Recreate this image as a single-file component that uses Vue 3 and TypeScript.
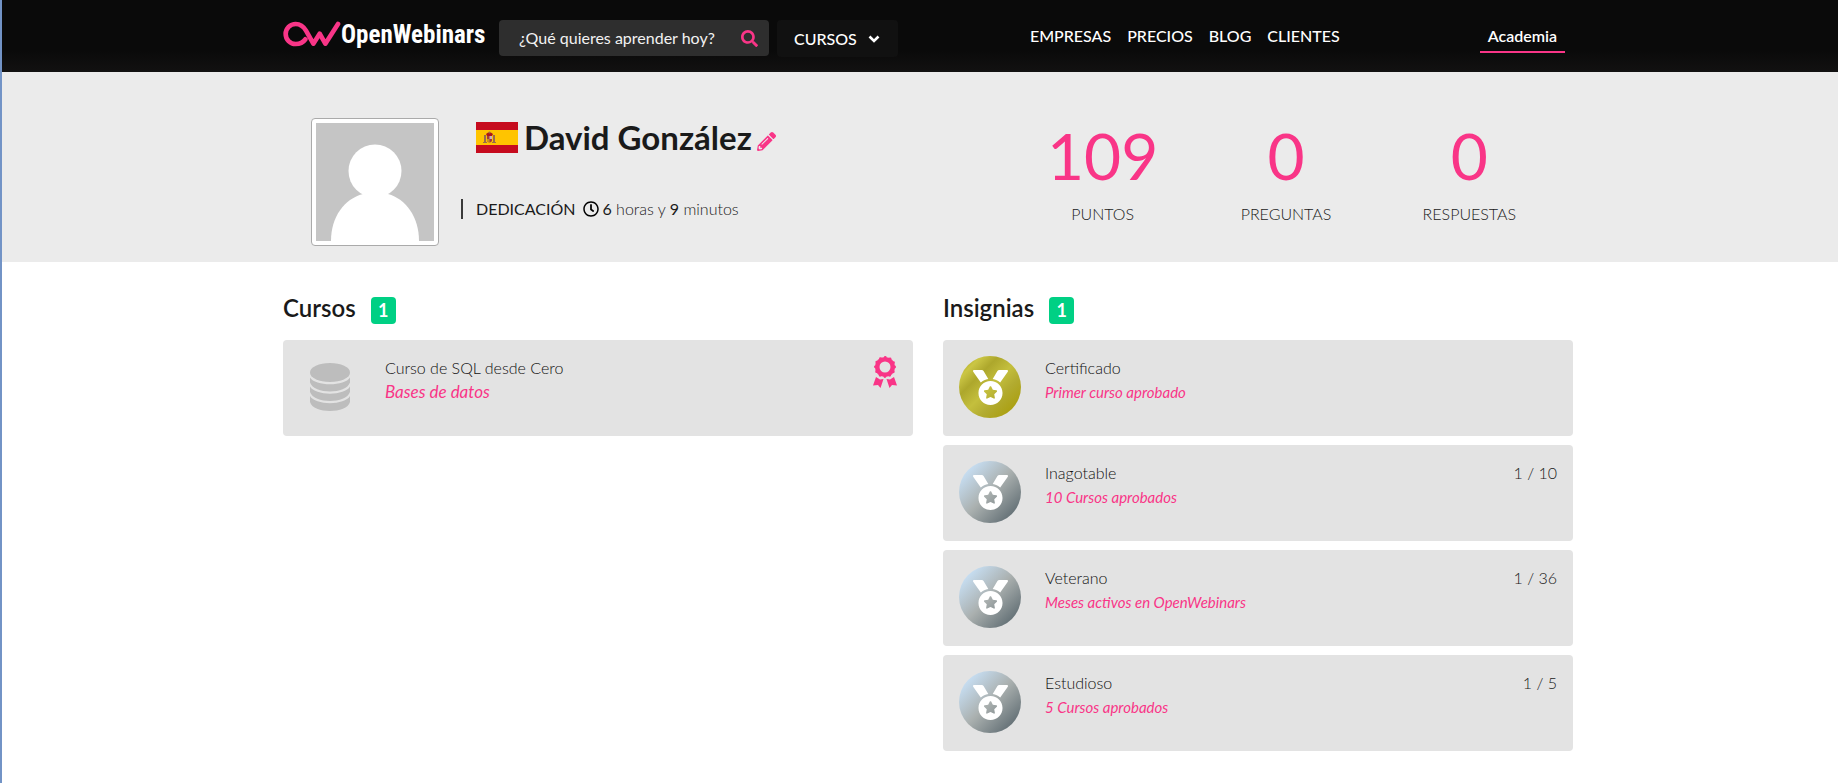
<script setup lang="ts">
import { ref } from 'vue'

interface Stat {
  value: number
  label: string
}

interface Badge {
  title: string
  detail: string
  tone: 'gold' | 'silver'
  progress?: string
}

const query = ref('')
const links = ['EMPRESAS', 'PRECIOS', 'BLOG', 'CLIENTES']

const stats: Stat[] = [
  { value: 109, label: 'PUNTOS' },
  { value: 0, label: 'PREGUNTAS' },
  { value: 0, label: 'RESPUESTAS' },
]

const badges: Badge[] = [
  { title: 'Certificado', detail: 'Primer curso aprobado', tone: 'gold' },
  { title: 'Inagotable', detail: '10 Cursos aprobados', tone: 'silver', progress: '1 / 10' },
  { title: 'Veterano', detail: 'Meses activos en OpenWebinars', tone: 'silver', progress: '1 / 36' },
  { title: 'Estudioso', detail: '5 Cursos aprobados', tone: 'silver', progress: '1 / 5' },
]
</script>

<template>
  <div class="page">
    <header class="topbar">
      <div class="container bar">
        <a class="logo" href="#" aria-label="OpenWebinars">
          <svg class="logo-mark" viewBox="0 0 174 84" aria-hidden="true">
            <path d="M67 58C60 68 50 72 38 72A30 30 0 0 1 38 12C53 12 62 20 69 32L91 71L110 41L127 71L165 12" />
          </svg>
          <span class="logo-name">OpenWebinars</span>
        </a>
        <form class="search" role="search" @submit.prevent>
          <input v-model="query" type="text" aria-label="Buscar" placeholder="¿Qué quieres aprender hoy?" />
          <button type="submit" aria-label="Buscar cursos">
            <svg viewBox="0 0 512 512" aria-hidden="true">
              <path d="M505 442.7L405.3 343c-4.5-4.5-10.6-7-17-7H372c27.6-35.3 44-79.7 44-128C416 93.1 322.9 0 208 0S0 93.1 0 208s93.1 208 208 208c48.3 0 92.7-16.4 128-44v16.3c0 6.4 2.5 12.5 7 17l99.7 99.7c9.4 9.4 24.6 9.4 33.9 0l28.3-28.3c9.4-9.4 9.4-24.6.1-34zM208 336c-70.7 0-128-57.2-128-128 0-70.7 57.2-128 128-128 70.7 0 128 57.2 128 128 0 70.7-57.2 128-128 128z" />
            </svg>
          </button>
        </form>
        <button class="courses" type="button">
          CURSOS
          <svg viewBox="0 0 12 8" aria-hidden="true"><path d="M1.5 1.5L6 6L10.5 1.5" /></svg>
        </button>
        <nav class="links">
          <a v-for="link in links" :key="link" href="#">{{ link }}</a>
        </nav>
        <a class="academy" href="#">Academia</a>
      </div>
    </header>

    <section class="profile">
      <div class="container profile-row">
        <svg class="avatar" viewBox="0 0 118 118" role="img" aria-label="Foto de perfil">
          <rect width="118" height="118" fill="#c5c5c5" />
          <circle cx="59" cy="48" r="26.5" fill="#fff" />
          <path d="M15 118C15 94 28 76 47 71H72C90 76 103 94 103 118Z" fill="#fff" />
        </svg>
        <div class="person">
          <h1>
            <svg class="flag" viewBox="0 0 42 31" role="img" aria-label="España">
              <rect width="42" height="31" fill="#c60b1e" />
              <rect y="8" width="42" height="15" fill="#ffc400" />
              <g fill="#9a6a4e">
                <rect x="8" y="13" width="2" height="8" />
                <rect x="17" y="13" width="2" height="8" />
                <rect x="7" y="20" width="4" height="1" />
                <rect x="16" y="20" width="4" height="1" />
                <path d="M10 12Q13.5 8.500 17 12L16 14H11Z" fill="#ad1519" />
                <circle cx="13.500" cy="10.500" r="1" />
              </g>
              <path d="M11 14H16V19Q13.500 22 11 19Z" fill="#a63a3a" />
              <path d="M13.500 14H16V17H13.500Z" fill="#c9b3b8" />
              <path d="M11 17H13.500V20.500L11 19Z" fill="#c8941e" />
            </svg>
            <span>David González</span>
            <a class="edit" href="#" aria-label="Editar perfil">
              <svg viewBox="0 0 512 512" aria-hidden="true">
                <path d="M497.900 142.100l-46.100 46.100c-4.700 4.700-12.300 4.700-17 0l-111-111c-4.700-4.700-4.700-12.300 0-17l46.100-46.100c18.700-18.700 49.100-18.700 67.900 0l60.100 60.100c18.800 18.700 18.800 49.100 0 67.900zM284.200 99.800L21.600 362.400.4 483.900c-2.900 16.400 11.400 30.600 27.800 27.800l121.500-21.300 262.600-262.600c4.700-4.700 4.700-12.300 0-17l-111-111c-4.800-4.700-12.400-4.700-17.100 0zM124.100 339.900c-5.500-5.500-5.500-14.300 0-19.800l154-154c5.500-5.500 14.300-5.500 19.800 0s5.500 14.300 0 19.800l-154 154c-5.500 5.500-14.300 5.500-19.800 0zM88 424h48v36.300l-64.500 11.300-31.100-31.100L51.700 376H88v48z" />
              </svg>
            </a>
          </h1>
          <p class="dedication">
            <span>DEDICACIÓN</span>
            <svg viewBox="0 0 512 512" aria-hidden="true">
              <path d="M256 8C119 8 8 119 8 256s111 248 248 248 248-111 248-248S393 8 256 8zm0 448c-110.500 0-200-89.500-200-200S145.500 56 256 56s200 89.500 200 200-89.500 200-200 200zm61.800-104.400l-84.900-61.700c-3.100-2.300-4.900-5.900-4.900-9.700V116c0-6.600 5.400-12 12-12h32c6.600 0 12 5.400 12 12v141.700l66.800 48.600c5.400 3.900 6.500 11.400 2.600 16.800L334.600 349c-3.900 5.300-11.400 6.500-16.800 2.600z" />
            </svg>
            <span class="time"><b>6</b> horas y <b>9</b> minutos</span>
          </p>
        </div>
        <dl class="stats">
          <div v-for="stat in stats" :key="stat.label">
            <dd>{{ stat.value }}</dd>
            <dt>{{ stat.label }}</dt>
          </div>
        </dl>
      </div>
    </section>

    <main class="container columns">
      <section>
        <h2>Cursos <span class="count">1</span></h2>
        <article class="card">
          <div class="emblem">
            <svg class="database" viewBox="0 0 40 48" aria-hidden="true">
              <ellipse cx="20" cy="9.500" rx="20" ry="9.500" />
              <path d="M0 14.500C5 23.500 35 23.500 40 14.500V19.500C36 31.500 4 31.500 0 19.500Z" />
              <path d="M0 23.500C5 33 35 33 40 23.500V29C36 41 4 41 0 29Z" />
              <path d="M0 33C5 42.500 35 42.500 40 33V39C37 51 3 51 0 39Z" />
            </svg>
          </div>
          <div class="copy">
            <h3>Curso de SQL desde Cero</h3>
            <p class="topic">Bases de datos</p>
          </div>
          <svg class="award" viewBox="0 0 24 32" role="img" aria-label="Certificado obtenido">
            <circle cx="12" cy="11" r="7.800" fill="none" stroke="currentColor" stroke-width="4.600" />
            <circle cx="12" cy="11" r="9.600" fill="none" stroke="currentColor" stroke-width="2.800" stroke-linecap="round" stroke-dasharray="0 5.026" />
            <path d="M3 21L7 23.500L10.500 23L7.500 32L5 29L0 29.500ZM21 21L17 23.500L13.500 23L16.500 32L19 29L24 29.500Z" fill="currentColor" />
          </svg>
        </article>
      </section>

      <section>
        <h2>Insignias <span class="count">1</span></h2>
        <ul class="badges">
          <li v-for="badge in badges" :key="badge.title" class="card">
            <div class="emblem medal" :class="badge.tone">
              <svg viewBox="0 0 512 512" aria-hidden="true">
                <path d="M223.750 130.750L154.620 15.540A31.997 31.997 0 0 0 127.180 0H16.030C3.080 0-4.500 14.570 2.920 25.180l111.270 158.960c29.720-27.770 67.520-46.830 109.560-53.390zM495.970 0H384.820c-11.240 0-21.660 5.900-27.440 15.540l-69.130 115.210c42.040 6.560 79.840 25.620 109.560 53.380L509.080 25.180C516.500 14.570 508.920 0 495.970 0zM256 160c-97.200 0-176 78.800-176 176s78.800 176 176 176 176-78.800 176-176-78.800-176-176-176zm92.520 157.260l-37.930 36.960 8.970 52.220c1.600 9.360-8.260 16.510-16.650 12.090L256 393.880l-46.900 24.650c-8.400 4.450-18.250-2.740-16.650-12.090l8.970-52.220-37.930-36.960c-6.820-6.640-3.050-18.230 6.350-19.590l52.430-7.640 23.430-47.520c2.110-4.280 6.190-6.390 10.280-6.390 4.110 0 8.220 2.140 10.330 6.390l23.430 47.520 52.430 7.640c9.400 1.360 13.170 12.950 6.350 19.590z" />
              </svg>
            </div>
            <div class="copy">
              <h3>{{ badge.title }}</h3>
              <p>{{ badge.detail }}</p>
            </div>
            <span v-if="badge.progress" class="progress">{{ badge.progress }}</span>
          </li>
        </ul>
      </section>
    </main>
  </div>
</template>

<style>
body {
  margin: 0;
  background: #fff;
}
</style>

<style scoped>
* {
  box-sizing: border-box;
}

.page {
  min-height: 100vh;
  border-left: 2px solid #7293c6;
  color: #1a1a1a;
  font-family: Lato, "Open Sans", sans-serif;
  font-size: 16px;
  line-height: 24px;
}

h1,
h2,
h3,
p,
dl,
dd,
ul {
  margin: 0;
  padding: 0;
}

a {
  color: inherit;
  text-decoration: none;
}

button {
  border: 0;
  font: inherit;
  cursor: pointer;
}

.topbar,
.profile,
.columns {
  padding-left: 16px;
}

.container {
  max-width: 1290px;
  margin: 0 auto;
}

.topbar {
  background: linear-gradient(#0a0a0a 70%, #121111);
  color: #fff;
}

.bar {
  display: flex;
  align-items: flex-start;
  height: 72px;
  padding-top: 20px;
}

.logo {
  display: flex;
  align-items: flex-start;
  width: 216px;
}

.logo-mark {
  flex: none;
  width: 58px;
  height: 28px;
  fill: none;
  stroke: #f93587;
  stroke-width: 14;
  stroke-linecap: round;
  stroke-linejoin: round;
}

.logo-name {
  font: bold 25px/30px "Roboto Condensed", Lato, sans-serif;
}

.search {
  display: flex;
  width: 270px;
  height: 36px;
  border-radius: 4px;
  background: #2e2e2e;
}

.search input {
  flex: 1;
  min-width: 0;
  padding: 0 0 0 20px;
  border: 0;
  outline: 0;
  background: transparent;
  color: #fff;
  font: inherit;
}

.search input::placeholder {
  color: #f2f2f2;
  opacity: 1;
}

.search button {
  padding: 0 11px;
  background: transparent;
}

.search svg {
  display: block;
  width: 17px;
  height: 17px;
  fill: #f93587;
}

.courses {
  display: flex;
  align-items: center;
  gap: 11px;
  height: 37px;
  margin-left: 8px;
  padding: 0 18px 0 17px;
  border-radius: 4px;
  background: #111;
  color: #fff;
  font-weight: 500;
}

.courses svg {
  width: 12px;
  height: 8px;
  fill: none;
  stroke: #fff;
  stroke-width: 2.6;
}

.links {
  display: flex;
  gap: 16px;
  margin-left: auto;
  padding-top: 4px;
  font-weight: 500;
}

.academy {
  margin: 4px 8px 0 140px;
  padding: 0 8px 3px;
  border-bottom: 2px solid #f93587;
  font-weight: 600;
}

.profile {
  background: #ebebeb;
}

.profile-row {
  display: flex;
  height: 190px;
  padding: 46px 12px 0 28px;
}

.avatar {
  width: 128px;
  height: 128px;
  padding: 4px;
  border: 1px solid #aaa;
  border-radius: 4px;
  background: #fff;
}

.person {
  flex: 1;
  padding-left: 22px;
}

h1 {
  display: flex;
  align-items: center;
  height: 38px;
  padding-left: 15px;
  font-size: 33px;
  font-weight: 700;
}

.flag {
  width: 42px;
  height: 31px;
  margin-right: 6px;
}

.edit {
  margin: 8px 0 0 5px;
}

.edit svg {
  display: block;
  width: 19px;
  height: 19px;
  fill: #f93587;
}

.dedication {
  display: flex;
  align-items: center;
  height: 20px;
  margin-top: 43px;
  padding-left: 13px;
  border-left: 2px solid #3a3a3a;
}

.dedication svg {
  width: 16px;
  height: 16px;
  margin: 0 3px 0 8px;
}

.time {
  font-weight: 300;
}

.time b {
  font-weight: 400;
}

.stats {
  display: grid;
  grid-template-columns: repeat(3, 1fr);
  width: 550px;
  text-align: center;
}

.stats div {
  display: flex;
  flex-direction: column;
}

dd {
  height: 72px;
  margin: 2px 0 10px;
  color: #f93587;
  font-size: 64px;
  line-height: 72px;
}

dt {
  font-weight: 300;
}

.columns {
  display: grid;
  grid-template-columns: 1fr 1fr;
  gap: 30px;
  box-sizing: content-box;
  padding-top: 30px;
}

h2 {
  display: flex;
  align-items: center;
  gap: 15px;
  height: 32px;
  margin-bottom: 16px;
  font-size: 24px;
  font-weight: 600;
}

.count {
  width: 25px;
  height: 27px;
  margin-top: 5px;
  border-radius: 4px;
  background: #00d084;
  color: #fff;
  font-size: 18px;
  font-weight: 700;
  line-height: 27px;
  text-align: center;
}

.badges {
  display: grid;
  gap: 9px;
  list-style: none;
}

.card {
  display: flex;
  height: 96px;
  padding: 16px;
  border-radius: 4px;
  background: #e3e3e3;
}

.emblem {
  display: flex;
  align-items: center;
  justify-content: center;
  width: 62px;
  height: 62px;
  margin-right: 24px;
}

.database {
  width: 40px;
  height: 48px;
  fill: #bdbdbd;
}

.medal {
  border-radius: 50%;
}

.gold {
  background: linear-gradient(135deg, #b9b32d 12%, #cbc645 18%, #ada72c 32%, #c4bf3d 50%, #b2ab30 66%, #aba013 86%);
}

.silver {
  background: linear-gradient(135deg, #c8e0f5 12%, #aab0af 50%, #5f6c72 90%);
}

.medal svg {
  width: 35px;
  height: 35px;
  fill: #fff;
}

.copy {
  flex: 1;
}

h3 {
  color: #111;
  font-size: 16px;
  font-weight: 300;
}

.copy p {
  color: #f93587;
  font-size: 15px;
  font-style: italic;
}

.copy .topic {
  font-size: 17px;
}

.award {
  width: 24px;
  height: 32px;
  color: #f93587;
}

.progress {
  font-weight: 300;
}
</style>
